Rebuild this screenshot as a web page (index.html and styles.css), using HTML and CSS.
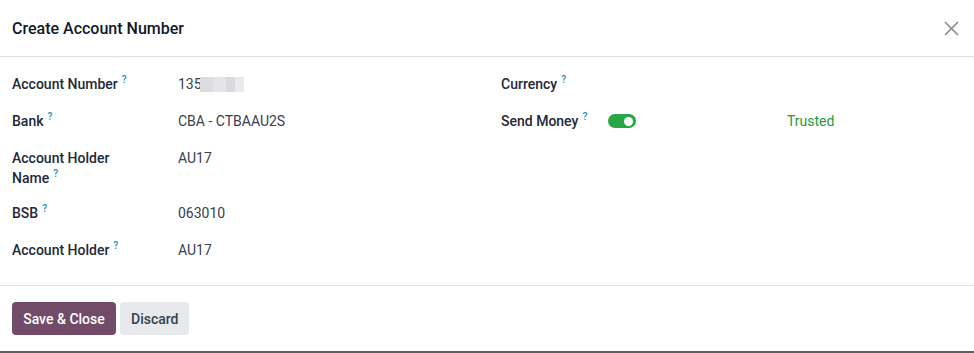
FILE: index.html
```html
<!DOCTYPE html>
<html>
<head>
<meta charset="utf-8">
<link rel="stylesheet" href="styles.css">
</head>
<body>
<div class="modal">
  <header class="modal-header">
    <h4 class="modal-title">Create Account Number</h4>
    <button class="close" aria-label="Close">
      <svg width="15" height="15" viewBox="0 0 15 15"><path d="M1 1 L14 14 M14 1 L1 14" stroke="#8a8a8a" stroke-width="1.6" fill="none"/></svg>
    </button>
  </header>
  <main class="modal-body">
    <div class="group">
      <div class="row">
        <div class="label">Account Number<sup class="tip">?</sup></div>
        <div class="value"><span>135</span><span class="blur"></span></div>
      </div>
      <div class="row">
        <div class="label">Bank<sup class="tip">?</sup></div>
        <div class="value">CBA - CTBAAU2S</div>
      </div>
      <div class="row">
        <div class="label">Account Holder Name<sup class="tip">?</sup></div>
        <div class="value">AU17</div>
      </div>
      <div class="row">
        <div class="label">BSB<sup class="tip">?</sup></div>
        <div class="value">063010</div>
      </div>
      <div class="row">
        <div class="label">Account Holder<sup class="tip">?</sup></div>
        <div class="value">AU17</div>
      </div>
    </div>
    <div class="group group-right">
      <div class="row">
        <div class="label">Currency<sup class="tip">?</sup></div>
        <div class="value"></div>
      </div>
      <div class="row">
        <div class="label">Send Money<sup class="tip">?</sup></div>
        <div class="value value-flex">
          <div class="toggle-cell"><span class="toggle"><span class="knob"></span></span></div>
          <span class="trusted">Trusted</span>
        </div>
      </div>
    </div>
  </main>
  <footer class="modal-footer">
    <button class="btn btn-primary">Save &amp; Close</button>
    <button class="btn btn-secondary">Discard</button>
  </footer>
</div>
</body>
</html>
```
FILE: styles.css
```css
* { box-sizing: border-box; }
html, body {
  margin: 0;
  padding: 0;
  height: 353px;
  overflow: hidden;
}
body {
  background: #5e5e5e;
  font-family: Roboto, "Liberation Sans", sans-serif;
  font-size: 14px;
  color: #374151;
}
.modal {
  background: #ffffff;
  width: 974px;
  height: 351px;
  display: flex;
  flex-direction: column;
}
.modal-header {
  height: 57px;
  flex: none;
  border-bottom: 1px solid #dee2e6;
  display: flex;
  align-items: center;
  justify-content: space-between;
  padding: 0 15px 0 12px;
}
.modal-title {
  margin: 0;
  font-size: 16px;
  font-weight: 500;
  color: #111827;
}
.close {
  border: 0;
  background: none;
  padding: 0;
  width: 15px;
  height: 15px;
  display: block;
}
.close svg { display: block; }
.modal-body {
  height: 229px;
  flex: none;
  padding: 17px 12px 0 12px;
  border-bottom: 1px solid #dee2e6;
  display: grid;
  grid-template-columns: 461px 461px;
  column-gap: 28px;
  align-content: start;
}
.group {
  display: flex;
  flex-direction: column;
  row-gap: 15px;
}
.row {
  display: flex;
  min-height: 22px;
  align-items: flex-start;
}
.label {
  width: 166px;
  flex: none;
  line-height: 20px;
  font-weight: 500;
  color: #1f2937;
  padding-right: 36px;
}
.group-right .label { width: 107px; padding-right: 10px; }
.tip {
  font-size: 10px;
  color: #1a8fb6;
  margin-left: 4px;
  vertical-align: baseline;
  position: relative;
  top: -6px;
  font-weight: 500;
  line-height: 0;
}
.value {
  line-height: 20px;
  color: #374151;
  display: flex;
  align-items: center;
}
.blur {
  display: inline-block;
  width: 44px;
  height: 15px;
  margin-left: -2px;
  background: linear-gradient(90deg, #dcdde0 0 30%, #e4e5e8 30% 60%, #d9dadd 60% 80%, #e8eaec 80%);
}
.value-flex { flex: 1; }
.toggle-cell {
  width: 179px;
  flex: none;
  height: 20px;
  display: flex;
  align-items: center;
}
.toggle {
  width: 28px;
  height: 14px;
  border-radius: 7px;
  background: #28a745;
  display: flex;
  align-items: center;
  justify-content: flex-end;
  padding-right: 3px;
}
.knob {
  width: 9px;
  height: 9px;
  border-radius: 50%;
  background: #ffffff;
}
.trusted { color: #1e9b3b; }
.modal-footer {
  padding: 16px 12px;
  display: flex;
  gap: 4px;
}
.btn {
  height: 33px;
  border: 0;
  border-radius: 4px;
  font-family: Roboto, "Liberation Sans", sans-serif;
  font-size: 14px;
  font-weight: 500;
  padding: 0 11px;
}
.btn-primary {
  background: #714b67;
  color: #ffffff;
  width: 104px;
}
.btn-secondary {
  background: #e7e9ed;
  color: #374151;
  width: 69px;
}
```
